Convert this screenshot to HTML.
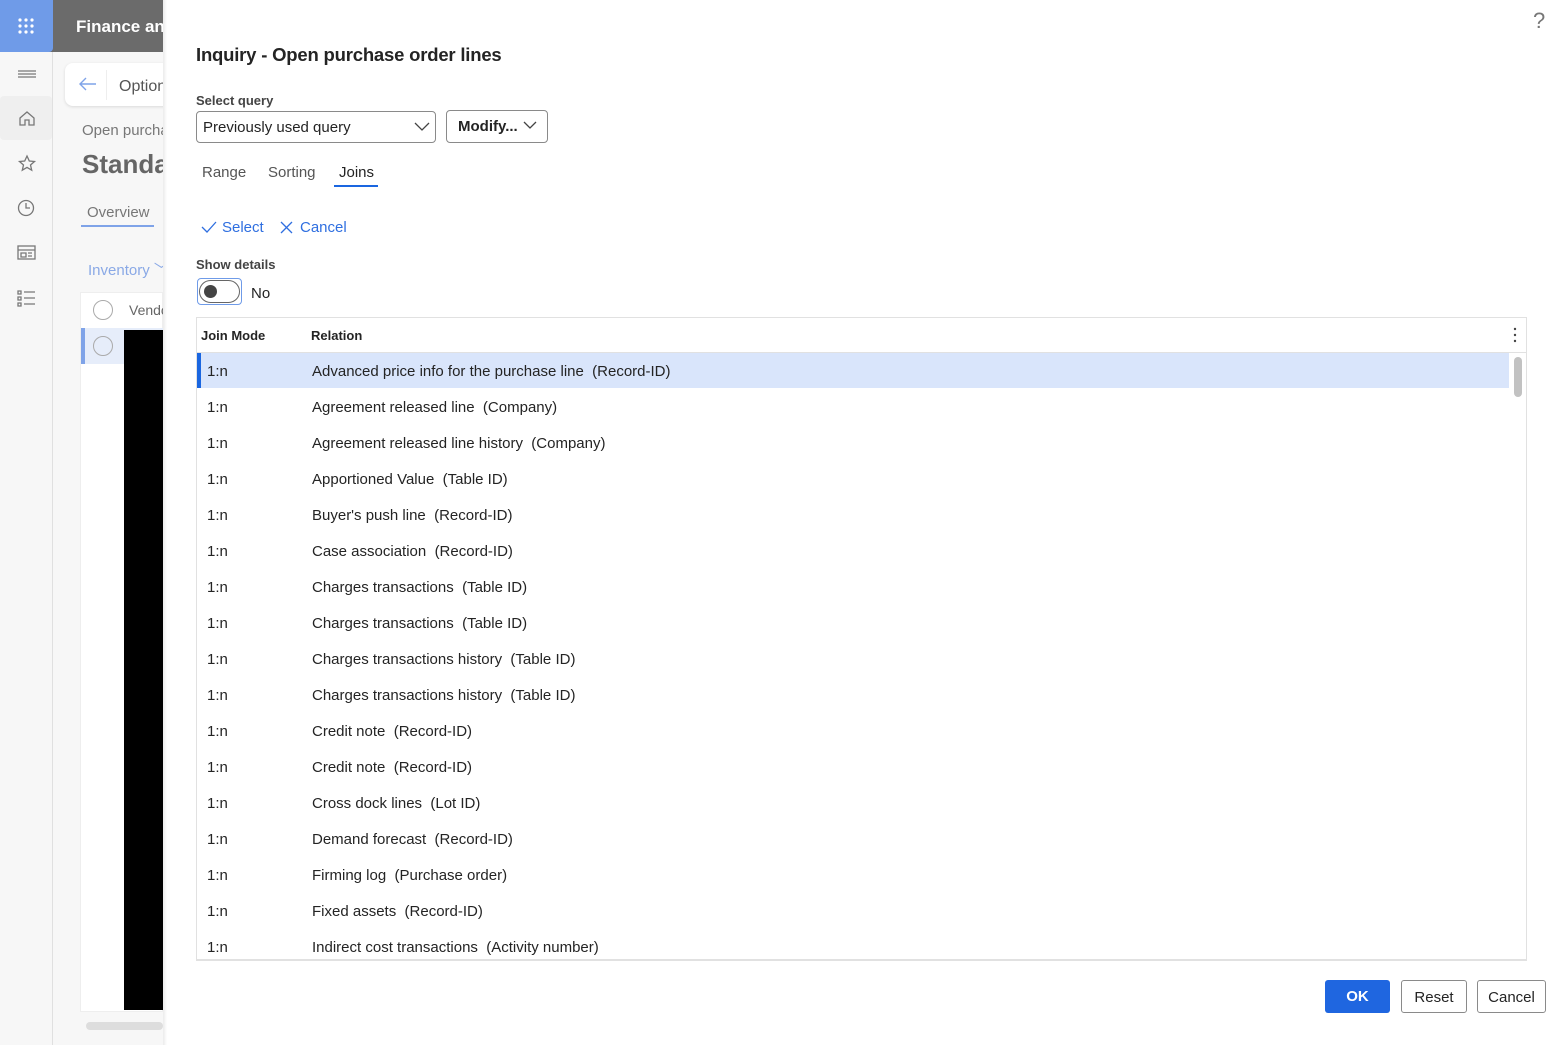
<!DOCTYPE html>
<html><head><meta charset="utf-8"><style>
*{box-sizing:border-box;margin:0;padding:0}
body{width:1568px;height:1045px;overflow:hidden;position:relative;font-family:"Liberation Sans","Segoe UI",sans-serif;background:#fff;color:#242424}
.abs{position:absolute}
.row{position:absolute;left:197px;width:1312px;height:36px;font-size:15px;line-height:36px}
.row .m{position:absolute;left:10px}
.row .r{position:absolute;left:115px}
</style></head><body>
<!-- background app (dimmed) -->
<div class="abs" style="left:0;top:0;width:163px;height:1045px;background:#f7f7f7"></div>
<div class="abs" style="left:0;top:0;width:163px;height:52px;background:#6b6b6b"></div>
<div class="abs" style="left:0;top:0;width:53px;height:52px;background:#6f9be8;border-radius:0 0 4px 0"></div>
<svg class="abs" style="left:17px;top:17px" width="18" height="18"><g fill="#fff"><circle cx="3" cy="3" r="1.6"/><circle cx="9" cy="3" r="1.6"/><circle cx="15" cy="3" r="1.6"/><circle cx="3" cy="9" r="1.6"/><circle cx="9" cy="9" r="1.6"/><circle cx="15" cy="9" r="1.6"/><circle cx="3" cy="15" r="1.6"/><circle cx="9" cy="15" r="1.6"/><circle cx="15" cy="15" r="1.6"/></g></svg>
<div class="abs" style="left:76px;top:17px;color:#fff;font-size:17px;font-weight:bold;white-space:nowrap">Finance and</div>
<div class="abs" style="left:52px;top:52px;width:1px;height:993px;background:#e0e0e0"></div>
<div class="abs" style="left:0;top:96px;width:52px;height:44px;background:#efefef;border-radius:4px"></div>
<svg class="abs" style="left:14px;top:62px" width="26" height="260" fill="none" stroke="#777" stroke-width="1.3">
<path d="M4 9h18M4 12h18M4 15h18"/>
<path d="M6 56l7-6 7 6v7h-5v-5h-4v5H6z"/>
<path d="M13 94l2.3 5 5.2.5-4 3.5 1.2 5.2-4.7-2.8-4.7 2.8 1.2-5.2-4-3.5 5.2-.5z"/>
<circle cx="12" cy="146" r="7.5"/><path d="M12 141v5h4"/>
<rect x="4" y="184" width="17" height="13"/><path d="M4 188h17M7 191h5v4H7zM14 191h4M14 194h4"/>
<path d="M4 229h3v3H4zM4 235h3v3H4zM4 241h3v3H4zM10 230h11M10 236h11M10 242h11"/>
</svg>
<div class="abs" style="left:65px;top:63px;width:110px;height:43px;background:#fff;border-radius:8px;box-shadow:0 1px 3px rgba(0,0,0,.12)"></div>
<svg class="abs" style="left:78px;top:76px" width="20" height="16" fill="none" stroke="#7fa3e8" stroke-width="1.4"><path d="M18 8H2M8 2L2 8l6 6"/></svg>
<div class="abs" style="left:106px;top:70px;width:1px;height:30px;background:#eee"></div>
<div class="abs" style="left:119px;top:78px;font-size:16px;color:#555">Option</div>
<div class="abs" style="left:82px;top:122px;font-size:15px;color:#777;white-space:nowrap">Open purcha</div>
<div class="abs" style="left:82px;top:149px;font-size:26px;font-weight:bold;color:#666">Standa</div>
<div class="abs" style="left:87px;top:204px;font-size:15px;color:#777">Overview</div>
<div class="abs" style="left:81px;top:225px;width:73px;height:2px;background:#7fa3e8"></div>
<div class="abs" style="left:88px;top:259px;font-size:15px;color:#8aa9e6">Inventory ﹀</div>
<div class="abs" style="left:80px;top:292px;width:83px;height:720px;background:#fff;border:1px solid #eee"></div>
<div class="abs" style="left:93px;top:300px;width:20px;height:20px;border:1px solid #aaa;border-radius:50%"></div>
<div class="abs" style="left:129px;top:302px;font-size:14px;color:#666">Vendo</div>
<div class="abs" style="left:81px;top:328px;width:82px;height:36px;background:#e6edfa"></div>
<div class="abs" style="left:81px;top:328px;width:4px;height:36px;background:#7fa3e8"></div>
<div class="abs" style="left:93px;top:336px;width:20px;height:20px;border:1px solid #aaa;border-radius:50%"></div>
<div class="abs" style="left:124px;top:330px;width:39px;height:680px;background:#000"></div>
<div class="abs" style="left:86px;top:1022px;width:77px;height:8px;background:#ddd;border-radius:4px"></div>
<!-- dialog surface -->
<div class="abs" style="left:163px;top:0;width:1405px;height:1045px;background:#fff"></div>
<div class="abs" style="left:163px;top:0;width:4px;height:1045px;background:linear-gradient(to right,rgba(0,0,0,.08),transparent)"></div>

<div class="abs" style="left:1533px;top:8px;font-size:22px;color:#777">?</div>
<div class="abs" style="left:196px;top:44px;font-size:18.5px;font-weight:bold;color:#242424;letter-spacing:-0.2px">Inquiry - Open purchase order lines</div>
<div class="abs" style="left:196px;top:93px;font-size:13px;font-weight:bold;color:#444">Select query</div>
<div class="abs" style="left:196px;top:111px;width:240px;height:32px;border:1px solid #8a8a8a;border-radius:4px;font-size:15px;line-height:32px;padding-left:6px">Previously used query</div>
<svg class="abs" style="left:414px;top:120px" width="16" height="12" fill="none" stroke="#444" stroke-width="1.3"><path d="M1 3l7 7 7-7"/></svg>
<div class="abs" style="left:446px;top:110px;width:102px;height:33px;border:1px solid #8a8a8a;border-radius:4px;font-size:15px;font-weight:bold;line-height:32px;padding-left:11px">Modify...</div>
<svg class="abs" style="left:523px;top:120px" width="14" height="10" fill="none" stroke="#444" stroke-width="1.3"><path d="M1 2l6 6 6-6"/></svg>
<div class="abs" style="left:202px;top:164px;font-size:15px;color:#555">Range</div>
<div class="abs" style="left:268px;top:164px;font-size:15px;color:#555">Sorting</div>
<div class="abs" style="left:339px;top:164px;font-size:15px;color:#242424">Joins</div>
<div class="abs" style="left:334px;top:185px;width:44px;height:2px;background:#1a66e0"></div>
<svg class="abs" style="left:201px;top:220px" width="16" height="14" fill="none" stroke="#2f6fe0" stroke-width="1.3"><path d="M1 7l5 5L15 2"/></svg>
<div class="abs" style="left:222px;top:219px;font-size:15px;color:#2f6fe0">Select</div>
<svg class="abs" style="left:280px;top:221px" width="13" height="13" fill="none" stroke="#2f6fe0" stroke-width="1.3"><path d="M1 1l11 11M12 1L1 12"/></svg>
<div class="abs" style="left:300px;top:219px;font-size:15px;color:#2f6fe0">Cancel</div>
<div class="abs" style="left:196px;top:257px;font-size:13px;font-weight:bold;color:#444">Show details</div>
<div class="abs" style="left:197px;top:278px;width:45px;height:27px;border:1px solid #6f9be8;border-radius:4px"></div>
<div class="abs" style="left:199px;top:280px;width:41px;height:23px;border:1px solid #666;border-radius:12px"></div>
<div class="abs" style="left:204px;top:285px;width:13px;height:13px;background:#444;border-radius:50%"></div>
<div class="abs" style="left:251px;top:285px;font-size:15px">No</div>

<div class="abs" style="left:196px;top:317px;width:1331px;height:644px;border:1px solid #e1e1e1;border-bottom:2px solid #e1e1e1"></div>
<div class="abs" style="left:197px;top:352px;width:1329px;height:1px;background:#e1e1e1"></div>
<div class="abs" style="left:201px;top:328px;font-size:13px;font-weight:bold">Join Mode</div>
<div class="abs" style="left:311px;top:328px;font-size:13px;font-weight:bold">Relation</div>
<svg class="abs" style="left:1512px;top:327px" width="6" height="16" fill="#444"><circle cx="3" cy="2" r="1.2"/><circle cx="3" cy="8" r="1.2"/><circle cx="3" cy="14" r="1.2"/></svg>
<div class="abs" style="left:1514px;top:357px;width:8px;height:40px;background:#c2c2c2;border-radius:4px"></div>
<div class="abs" style="left:197px;top:353px;width:1312px;height:35px;background:#d9e5fb"></div>
<div class="abs" style="left:197px;top:353px;width:4px;height:35px;background:#1a66e0"></div>

<div class="row" style="top:354px"><span class="m">1:n</span><span class="r">Advanced price info for the purchase line&nbsp; (Record-ID)</span></div>
<div class="row" style="top:390px"><span class="m">1:n</span><span class="r">Agreement released line&nbsp; (Company)</span></div>
<div class="row" style="top:426px"><span class="m">1:n</span><span class="r">Agreement released line history&nbsp; (Company)</span></div>
<div class="row" style="top:462px"><span class="m">1:n</span><span class="r">Apportioned Value&nbsp; (Table ID)</span></div>
<div class="row" style="top:498px"><span class="m">1:n</span><span class="r">Buyer's push line&nbsp; (Record-ID)</span></div>
<div class="row" style="top:534px"><span class="m">1:n</span><span class="r">Case association&nbsp; (Record-ID)</span></div>
<div class="row" style="top:570px"><span class="m">1:n</span><span class="r">Charges transactions&nbsp; (Table ID)</span></div>
<div class="row" style="top:606px"><span class="m">1:n</span><span class="r">Charges transactions&nbsp; (Table ID)</span></div>
<div class="row" style="top:642px"><span class="m">1:n</span><span class="r">Charges transactions history&nbsp; (Table ID)</span></div>
<div class="row" style="top:678px"><span class="m">1:n</span><span class="r">Charges transactions history&nbsp; (Table ID)</span></div>
<div class="row" style="top:714px"><span class="m">1:n</span><span class="r">Credit note&nbsp; (Record-ID)</span></div>
<div class="row" style="top:750px"><span class="m">1:n</span><span class="r">Credit note&nbsp; (Record-ID)</span></div>
<div class="row" style="top:786px"><span class="m">1:n</span><span class="r">Cross dock lines&nbsp; (Lot ID)</span></div>
<div class="row" style="top:822px"><span class="m">1:n</span><span class="r">Demand forecast&nbsp; (Record-ID)</span></div>
<div class="row" style="top:858px"><span class="m">1:n</span><span class="r">Firming log&nbsp; (Purchase order)</span></div>
<div class="row" style="top:894px"><span class="m">1:n</span><span class="r">Fixed assets&nbsp; (Record-ID)</span></div>
<div class="row" style="top:930px"><span class="m">1:n</span><span class="r">Indirect cost transactions&nbsp; (Activity number)</span></div>

<div class="abs" style="left:1325px;top:980px;width:65px;height:33px;background:#1f66e0;border-radius:3px;color:#fff;font-size:15px;font-weight:bold;text-align:center;line-height:33px">OK</div>
<div class="abs" style="left:1401px;top:980px;width:66px;height:33px;border:1px solid #8a8a8a;border-radius:3px;font-size:15px;text-align:center;line-height:33px">Reset</div>
<div class="abs" style="left:1477px;top:980px;width:69px;height:33px;border:1px solid #8a8a8a;border-radius:3px;font-size:15px;text-align:center;line-height:33px">Cancel</div>
</body></html>
